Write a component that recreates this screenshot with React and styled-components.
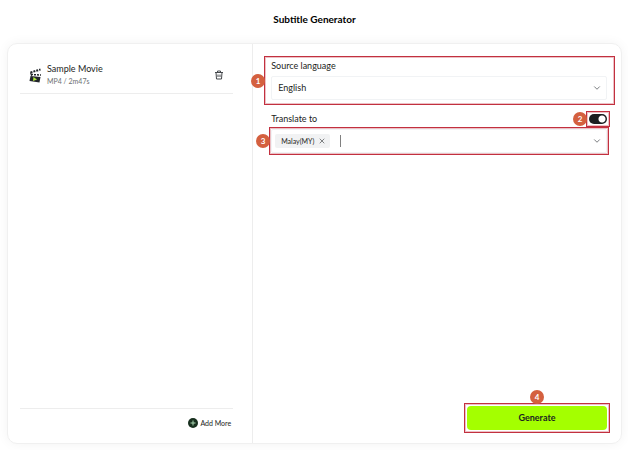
import React, { useState } from "react";
import styled, { createGlobalStyle } from "styled-components";
import { ChevronDown, X } from "lucide-react";

const colors = {
  text: "#1c1e21",
  muted: "#6d6f72",
  line: "#ededed",
  accent: "#a4ff00",
  mark: "#c2303f",
  badge: "#d4603f",
  dark: "#18301f",
};

const GlobalStyle = createGlobalStyle`
  * {
    box-sizing: border-box;
  }
  body {
    margin: 0;
    background-color: #fff;
    color: ${colors.text};
    font-family: Lato, "Liberation Sans", sans-serif;
    font-size: 9px;
    line-height: 14px;
  }
  button, input, select {
    margin: 0;
    padding: 0;
    border: none;
    background: none;
    color: inherit;
    font: inherit;
  }
  button {
    cursor: pointer;
  }
`

const Page = styled.div`
  display: flex;
  flex-direction: column;
  min-height: 100vh;
  padding: 0 6px 6px 7px;
`

const Title = styled.h1`
  margin: 0;
  padding: 12px 0 17px;
  font-size: 10px;
  line-height: 14px;
  font-weight: 700;
  text-align: center;
  color: #000;
`

const Card = styled.main`
  display: grid;
  grid-template-columns: 2fr 3fr;
  flex: 1;
  border: 1px solid #f0f0f0;
  border-radius: 10px;
  box-shadow: 0 0 12px rgba(0, 0, 0, 0.05);
`

const Files = styled.section`
  display: flex;
  flex-direction: column;
  justify-content: space-between;
  padding: 14px 19px 13px 12px;
  border-right: 1px solid ${colors.line};
`

const FileRow = styled.div`
  display: flex;
  align-items: center;
  gap: 5px;
  padding: 5px 9px 6px;
  border-bottom: 1px solid ${colors.line};
`

const FileInfos = styled.div`
  flex: 1;
  line-height: 12px;
`

const FileName = styled.div`
  font-size: 9px;
`

const FileMeta = styled.div`
  font-size: 7px;
  color: ${colors.muted};
`

const IconButton = styled.button`
  display: flex;
  align-items: center;
  justify-content: center;
  color: #45484c;
`

const FilesFooter = styled.div`
  display: flex;
  justify-content: flex-end;
  padding: 7px 2px 0 0;
  border-top: 1px solid ${colors.line};
`

const AddButton = styled.button`
  display: flex;
  align-items: center;
  gap: 2px;
  font-size: 7px;
`

const Settings = styled.section`
  display: flex;
  flex-direction: column;
  padding: 15px 14px 13px 18px;
`

const Field = styled.div`
  position: relative;
  display: flex;
  flex-direction: column;
  gap: 3px;
  margin-bottom: 12px;
`

const FieldHead = styled.div`
  display: flex;
  align-items: center;
  justify-content: space-between;
  height: 14px;
`

const SelectBox = styled.div`
  position: relative;
  display: flex;
  align-items: center;
  height: 24px;
  border: 1px solid #f1f3f5;
  border-radius: 2px;

  > svg {
    position: absolute;
    right: 4px;
    color: #606468;
    pointer-events: none;
  }
`

const Select = styled.select`
  width: 100%;
  height: 100%;
  padding-left: 6px;
  appearance: none;
  outline: none;
`

const Tag = styled.span`
  display: flex;
  align-items: center;
  gap: 4px;
  height: 14px;
  margin-left: 3px;
  padding: 0 4px 0 6px;
  border-radius: 2px;
  background-color: #f1f2f3;
  font-size: 7px;
`

const Caret = styled.span`
  width: 1px;
  height: 12px;
  margin-left: 10px;
  background-color: #808080;
`

const TagInput = styled.input`
  flex: 1;
  min-width: 0;
  outline: none;
`

const SwitchWrap = styled.div`
  position: relative;
  display: flex;
`

const Switch = styled.input`
  width: 18px;
  height: 10px;
  appearance: none;
  border-radius: 5px;
  background: radial-gradient(circle at 13px 5px, #fff 3px, transparent 4px) ${colors.text};
  cursor: pointer;

  &:not(:checked) {
    background: radial-gradient(circle at 5px 5px, #fff 3px, transparent 4px) #b5b5b5;
  }
`

const Action = styled.div`
  position: relative;
  align-self: flex-end;
  width: 140px;
  margin-top: auto;
`

const GenerateButton = styled.button`
  display: block;
  width: 100%;
  height: 24px;
  border-radius: 4px;
  background-color: ${colors.accent};
  font-size: 9px;
  font-weight: 700;
`

// Tutorial overlay: frame and step number laid over the controls
const Frame = styled.div`
  position: absolute;
  inset: ${props => props.$inset};
  border: 1px solid ${colors.mark};
  box-shadow: inset 0 0 0 1px rgba(194, 48, 63, 0.3);
  pointer-events: none;
`

const Badge = styled.span`
  position: absolute;
  display: flex;
  align-items: center;
  justify-content: center;
  width: 14px;
  height: 14px;
  border-radius: 50%;
  background-color: ${colors.badge};
  color: #fff;
  font-size: 8px;
  font-weight: 700;
  line-height: 14px;
  ${props => props.$above
    ? "bottom: 100%; left: calc(50% - 7px);"
    : "right: 100%; top: calc(50% - 7px);"}
`

function Step({ number, inset, above }) {
  return (
    <Frame $inset={inset}>
      <Badge $above={above}>{number}</Badge>
    </Frame>
  );
}

function ClapperIcon() {
  return (
    <svg width="13" height="15" viewBox="0 0 26 30" aria-hidden="true">
      <path d="M3 9 L23 3" stroke="#23262a" strokeWidth="4" strokeDasharray="4 2" />
      <path d="M3 9 L5 16" stroke="#23262a" strokeWidth="2" />
      <path d="M4 13 L24 14" stroke="#23262a" strokeWidth="3" strokeDasharray="4 2" />
      <path d="M3 16 L23 18 L21 29 L1 26 Z" fill="#23262a" />
      <path d="M9 18 L16 23 L8 26 Z" fill="#b4ed3c" />
    </svg>
  );
}

function TrashIcon() {
  return (
    <svg width="10" height="10" viewBox="0 0 20 20" fill="none" stroke="currentColor" strokeWidth="2" aria-hidden="true">
      <path d="M2 5 H18 M7 5 V2 H13 V5 M4 5 L5 18 H15 L16 5 M8 9 V14 M12 9 V14" />
    </svg>
  );
}

function PlusIcon() {
  return (
    <svg width="10" height="10" viewBox="0 0 20 20" aria-hidden="true">
      <circle cx="10" cy="10" r="10" fill={colors.dark} />
      <path d="M10 5 V15 M5 10 H15" stroke="#a9d6b2" strokeWidth="2" />
    </svg>
  );
}

export default function App() {

  const [source, setSource] = useState("English");
  const [translate, setTranslate] = useState(true);
  const [targets, setTargets] = useState(["Malay(MY)"]);

  const removeTarget = (name) => {
    setTargets(targets.filter(target => target !== name));
  }

  return (
    <>
      <GlobalStyle />
      <Page>
        <Title>Subtitle Generator</Title>
        <Card>
          <Files>
            <FileRow>
              <ClapperIcon />
              <FileInfos>
                <FileName>Sample Movie</FileName>
                <FileMeta>MP4 / 2m47s</FileMeta>
              </FileInfos>
              <IconButton aria-label="Delete file">
                <TrashIcon />
              </IconButton>
            </FileRow>
            <FilesFooter>
              <AddButton><PlusIcon />Add More</AddButton>
            </FilesFooter>
          </Files>
          <Settings>
            <Field>
              <FieldHead><label htmlFor="source">Source language</label></FieldHead>
              <SelectBox>
                <Select id="source" value={source} onChange={e => setSource(e.target.value)}>
                  <option>English</option>
                </Select>
                <ChevronDown size={10} />
              </SelectBox>
              <Step number={1} inset="-3px -8px -5px -7px" />
            </Field>
            <Field>
              <FieldHead>
                <label htmlFor="target">Translate to</label>
                <SwitchWrap>
                  <Switch
                    type="checkbox"
                    role="switch"
                    aria-label="Translate subtitles"
                    checked={translate}
                    onChange={e => setTranslate(e.target.checked)}
                  />
                  <Step number={2} inset="-3px" />
                </SwitchWrap>
              </FieldHead>
              <SelectBox>
                {targets.map(target => (
                  <Tag key={target}>
                    {target}
                    <IconButton aria-label={`Remove ${target}`} onClick={() => removeTarget(target)}>
                      <X size={8} />
                    </IconButton>
                  </Tag>
                ))}
                <Caret />
                <TagInput id="target" />
                <ChevronDown size={10} />
                <Step number={3} inset="-3px" />
              </SelectBox>
            </Field>
            <Action>
              <GenerateButton>Generate</GenerateButton>
              <Step number={4} inset="-3px" above />
            </Action>
          </Settings>
        </Card>
      </Page>
    </>
  );

}
